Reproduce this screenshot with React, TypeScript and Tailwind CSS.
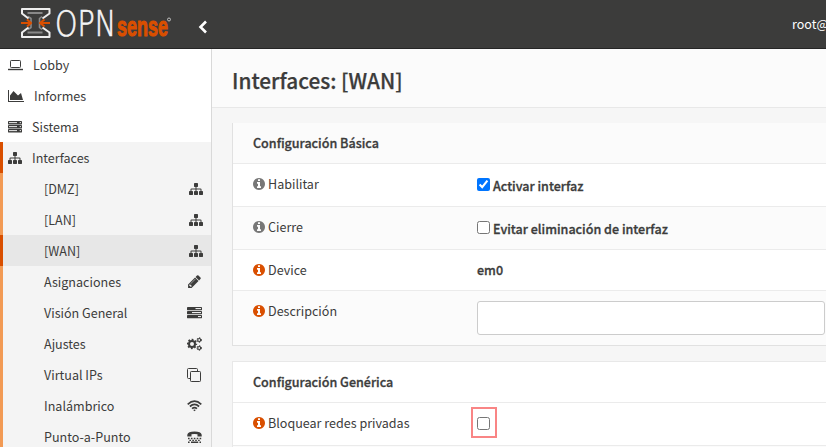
import type { ReactNode } from "react";

function Laptop() {
  return (
    <svg width="15" height="12" viewBox="0 0 15 12" fill="none" stroke="currentColor">
      <rect x="2.5" y="1.5" width="10" height="7" rx="0.8" />
      <path d="M0 10.5H15" strokeWidth="1.4" />
    </svg>
  );
}

function Sitemap() {
  return (
    <svg className="shrink-0" width="14" height="14" viewBox="0 0 1792 1792" fill="currentColor">
      <path d="M1792 1248v320q0 40-28 68t-68 28h-320q-40 0-68-28t-28-68v-320q0-40 28-68t68-28h96v-192h-512v192h96q40 0 68 28t28 68v320q0 40-28 68t-68 28h-320q-40 0-68-28t-28-68v-320q0-40 28-68t68-28h96v-192h-512v192h96q40 0 68 28t28 68v320q0 40-28 68t-68 28h-320q-40 0-68-28t-28-68v-320q0-40 28-68t68-28h96v-192q0-52 38-90t90-38h512v-192h-96q-40 0-68-28t-28-68v-320q0-40 28-68t68-28h320q40 0 68 28t28 68v320q0 40-28 68t-68 28h-96v192h512q52 0 90 38t38 90v192h96q40 0 68 28t28 68z" />
    </svg>
  );
}

function Info({ className }: { className: string }) {
  return (
    <svg className={className} width="12" height="12" viewBox="128 128 1536 1536" fill="currentColor">
      <path d="M1152 1376v-160q0-14-9-23t-23-9h-96v-512q0-14-9-23t-23-9h-320q-14 0-23 9t-9 23v160q0 14 9 23t23 9h96v320h-96q-14 0-23 9t-9 23v160q0 14 9 23t23 9h448q14 0 23-9t9-23zm-128-896v-160q0-14-9-23t-23-9h-192q-14 0-23 9t-9 23v160q0 14 9 23t23 9h192q14 0 23-9t9-23zm640 416q0 209-103 385.5t-279.5 279.5-385.5 103-385.5-103-279.5-279.5-103-385.5 103-385.5 279.5-279.5 385.5-103 385.5 103 279.5 279.5 103 385.5z" />
    </svg>
  );
}

function AreaChart() {
  return (
    <svg width="16" height="14" viewBox="0 0 2048 1792" fill="currentColor">
      <path d="M2048 1536v128h-2048v-1536h128v1408h1920zm-384-1024l256 896h-1664v-576l448-576 576 576z" />
    </svg>
  );
}

function Server() {
  return (
    <svg width="14" height="14" viewBox="0 0 14 14">
      {[1, 5, 9].map((y) => (
        <g key={y}>
          <rect x="0" y={y} width="14" height="3.5" rx="0.4" fill="currentColor" />
          <path d={`M1 ${y + 1.6}H9`} stroke="#fff" strokeWidth="0.9" />
          <circle cx="12.3" cy={y + 1.6} r="0.7" fill="#fff" />
        </g>
      ))}
    </svg>
  );
}

function Tasks() {
  return (
    <svg width="15" height="14" viewBox="0 0 15 14">
      {[[1, 8.5], [5, 5], [9, 11]].map(([y, x]) => (
        <g key={y}>
          <rect x="0" y={y} width="15" height="3.2" rx="0.4" fill="currentColor" />
          <path d={`M${x} ${y + 1.6}H14`} stroke="#fff" strokeWidth="1" />
        </g>
      ))}
    </svg>
  );
}

function Pencil() {
  return (
    <svg width="15" height="15" viewBox="0 0 1792 1792" fill="currentColor">
      <path d="M491 1536l91-91-235-235-91 91v107h128v128h107zm523-928q0-22-22-22-10 0-17 7l-542 542q-7 7-7 17 0 22 22 22 10 0 17-7l542-542q7-7 7-17zm-54-192l416 416-832 832h-416v-416zm683 96q0 53-37 90l-166 166-416-416 166-165q36-38 90-38 53 0 91 38l235 234q37 39 37 91z" />
    </svg>
  );
}

function Cogs() {
  return (
    <svg width="15" height="14" viewBox="0 0 15 14" fill="none" stroke="currentColor">
      <circle cx="5" cy="7" r="3" strokeWidth="2" />
      <circle cx="5" cy="7" r="4.3" strokeWidth="1.7" strokeDasharray="1.8 1.577" strokeDashoffset="0.9" />
      <circle cx="12.2" cy="3" r="1.5" strokeWidth="1.2" />
      <circle cx="12.2" cy="3" r="2.3" strokeWidth="1" strokeDasharray="1.2 1.209" />
      <circle cx="12.2" cy="11" r="1.5" strokeWidth="1.2" />
      <circle cx="12.2" cy="11" r="2.3" strokeWidth="1" strokeDasharray="1.2 1.209" />
    </svg>
  );
}

function Clone() {
  return (
    <svg width="14" height="14" viewBox="0 0 14 14" fill="none" stroke="currentColor">
      <path d="M3 10.5H1.500Q0.500 10.500 0.500 9.500V1.500Q0.500 0.500 1.500 0.500H9.500Q10.500 0.500 10.500 1.500V3" />
      <rect x="3.500" y="3.500" width="10" height="10" rx="0.8" />
    </svg>
  );
}

function Wifi() {
  return (
    <svg width="15" height="12" viewBox="0 0 15 12" fill="none" stroke="currentColor" strokeWidth="1.7">
      <path d="M0.700 4.300Q7.500 -1.900 14.300 4.300M2.900 6.500Q7.500 2.300 12.100 6.500M5 8.600Q7.500 6.500 10 8.600" />
      <path d="M6.200 9.900Q7.500 9 8.800 9.900L7.500 11.300Z" fill="currentColor" stroke="none" />
    </svg>
  );
}

function Tty() {
  return (
    <svg width="15" height="12" viewBox="0 0 15 12" fill="none" stroke="currentColor">
      <path d="M0.300 5.500V3.800Q1 0.500 7.500 0.500T14.700 3.800V5.500H10.500V3.300Q7.500 2.500 4.500 3.300V5.500Z" fill="currentColor" stroke="none" />
      <path d="M1 7.500H14.500" strokeWidth="1.500" strokeDasharray="1.600 1.300" />
      <path d="M2.400 9.300H13.500" strokeWidth="1.300" strokeDasharray="1.600 1.300" />
      <path d="M1 11.200H2.600M4 11.200H11.200M12.500 11.200H14" strokeWidth="1.400" />
    </svg>
  );
}

function Logo() {
  return (
    <svg className="shrink-0" width="153" height="34" viewBox="0 0 153 34">
      <g fill="none" strokeLinejoin="round">
        <path d="M7.500 6H22.500M7.500 25.500H22.500" stroke="#888" strokeWidth="1.800" />
        <path d="M8 9.500L11 11.500V20.500L8 22.500M22 9.500L19.500 11.500V20.500L22 22.500" stroke="#8a8a8a" strokeWidth="1.600" />
        <path d="M8.500 11.500L2 6.500V2H29.500V6.500L22.500 11.500M8.500 20.500L2 25.500V30H29.500V25.500L22.500 20.500" stroke="#eee" strokeWidth="2" />
        <path d="M1 16H10.500M7 12.500L11 16L7 19.500M30 16H20.500M24.500 12.500L20 16L24.500 19.500" stroke="#d94f00" strokeWidth="2.200" />
      </g>
      <text x="35" y="29" textLength="61" lengthAdjust="spacingAndGlyphs" fill="#f5f5f5" stroke="#f5f5f5" strokeWidth="0.700" fontFamily="DejaVu Sans" fontWeight="200" fontSize="35">OPN</text>
      <text x="97" y="28.500" textLength="51" lengthAdjust="spacingAndGlyphs" fill="#d94f00" stroke="#d94f00" strokeWidth="1.100" fontFamily="Liberation Sans" fontWeight="700" fontSize="27">sense</text>
      <circle cx="149" cy="12.500" r="1.500" fill="none" stroke="#ccc" strokeWidth="0.900" />
    </svg>
  );
}

const top = [
  { label: "Lobby", icon: <Laptop /> },
  { label: "Informes", icon: <AreaChart /> },
  { label: "Sistema", icon: <Server /> },
];

const sub: { label: string; icon: ReactNode; active?: boolean; port?: boolean }[] = [
  { label: "[DMZ]", icon: <Sitemap />, port: true },
  { label: "[LAN]", icon: <Sitemap />, port: true },
  { label: "[WAN]", icon: <Sitemap />, port: true, active: true },
  { label: "Asignaciones", icon: <Pencil /> },
  { label: "Visión General", icon: <Tasks /> },
  { label: "Ajustes", icon: <Cogs /> },
  { label: "Virtual IPs", icon: <Clone /> },
  { label: "Inalámbrico", icon: <Wifi /> },
  { label: "Punto-a-Punto", icon: <Tty /> },
];

const strong = "font-medium [-webkit-text-stroke:0.3px_currentColor]";

function Row({ label, help, height, bg, children }: { label: string; help?: boolean; height: string; bg: string; children: ReactNode }) {
  return (
    <div className={`flex border-t border-[#ebebeb] pl-5 ${height} ${bg}`}>
      <div className="flex h-10 w-[224px] shrink-0 items-center gap-[3px]">
        <Info className={help ? "text-[#d94f00]" : "text-[#777]"} />
        <span>{label}</span>
      </div>
      {children}
    </div>
  );
}

export default function App() {
  return (
    <div className="flex h-[447px] w-[826px] flex-col overflow-hidden bg-[#f6f6f6] font-['Noto_Sans_CJK_SC',sans-serif] text-[12.55px] leading-5 text-[#3c3c3b]">
      <header className="flex h-[49px] shrink-0 items-center border-b border-[#252525] bg-[#3c3c3b] pl-5 text-white">
        <Logo />
        <svg className="ml-[25px] mt-[5px] shrink-0" width="10" height="14" viewBox="0 0 10 14" fill="none" stroke="currentColor" strokeWidth="2.6"><path d="M8 1.500L2.500 7L8 12.500" /></svg>
        <span className="ml-[584px] whitespace-nowrap">root@</span>
      </header>
      <div className="flex min-h-0 flex-1">
        <nav className="w-[212px] shrink-0 border-r border-[#d9d9d9] bg-white">
          {top.map((t) => (
            <div key={t.label} className="flex h-[31px] items-center gap-[10px] pl-2">{t.icon}<span>{t.label}</span></div>
          ))}
          <div className="flex h-[31px] items-center gap-[10px] border-l-3 border-[#d94f00] bg-[#f4f4f4] pl-[5px]"><Sitemap /><span>Interfaces</span></div>
          {sub.map((s) => (
            <div key={s.label} className={`flex h-[31px] items-center justify-between border-l-3 pl-[41px] ${s.port ? "pr-[7px]" : "pr-[9px]"} ${s.active ? "border-[#d94f00] bg-[#e7e7e7]" : "border-[#f29a54] bg-[#f4f4f4]"}`}>
              <span>{s.label}</span>
              <span className="flex w-[16px] justify-center">{s.icon}</span>
            </div>
          ))}
        </nav>
        <main className="min-w-0 flex-1">
          <div className="flex h-[59px] items-center border-b border-[#e8e8e8] bg-[#fbfbfb] pl-5 pt-[3px]">
            <h1 className="text-[20.8px] font-medium [-webkit-text-stroke:0.25px_currentColor]">Interfaces: [WAN]</h1>
          </div>
          <section className="ml-5 mt-[15px] border-b border-l border-[#e1e1e1]">
            <div className={`flex h-10 items-center bg-[#fbfbfb] pl-5 ${strong}`}>Configuración Básica</div>
            <Row label="Habilitar" height="h-[43px]" bg="bg-white">
              <label className={`flex h-[42px] items-center gap-[3px] ${strong}`}><input type="checkbox" defaultChecked className="mb-[1px] size-[13px]" /><span className="pt-[1px]">Activar interfaz</span></label>
            </Row>
            <Row label="Cierre" height="h-[43px]" bg="bg-[#fbfbfb]">
              <label className={`flex h-[42px] items-center gap-[3px] ${strong}`}><input type="checkbox" className="mb-[1px] size-[13px]" /><span className="pt-[1px]">Evitar eliminación de interfaz</span></label>
            </Row>
            <Row label="Device" help height="h-[41px]" bg="bg-white">
              <div className={`flex h-10 items-center ${strong}`}>em0</div>
            </Row>
            <Row label="Descripción" help height="h-[55px]" bg="bg-[#fbfbfb]">
              <input type="text" className="mt-[10px] h-[34px] w-[348px] shrink-0 rounded-[3px] border border-[#ccc] bg-white" />
            </Row>
          </section>
          <section className="ml-5 mt-[15px] border-l border-t border-[#e8e8e8]">
            <div className={`flex h-10 items-center bg-white pl-5 ${strong}`}>Configuración Genérica</div>
            <Row label="Bloquear redes privadas" help height="h-[43px]" bg="bg-white">
              <div className="-ml-[6px] mt-1 flex h-[31px] w-[26px] items-center border-2 border-[#f98585] pl-1 pt-[1px]"><input type="checkbox" className="size-[13px]" /></div>
            </Row>
            <div className="h-4 border-t border-[#ebebeb] bg-[#fbfbfb]" />
          </section>
        </main>
      </div>
    </div>
  );
}
